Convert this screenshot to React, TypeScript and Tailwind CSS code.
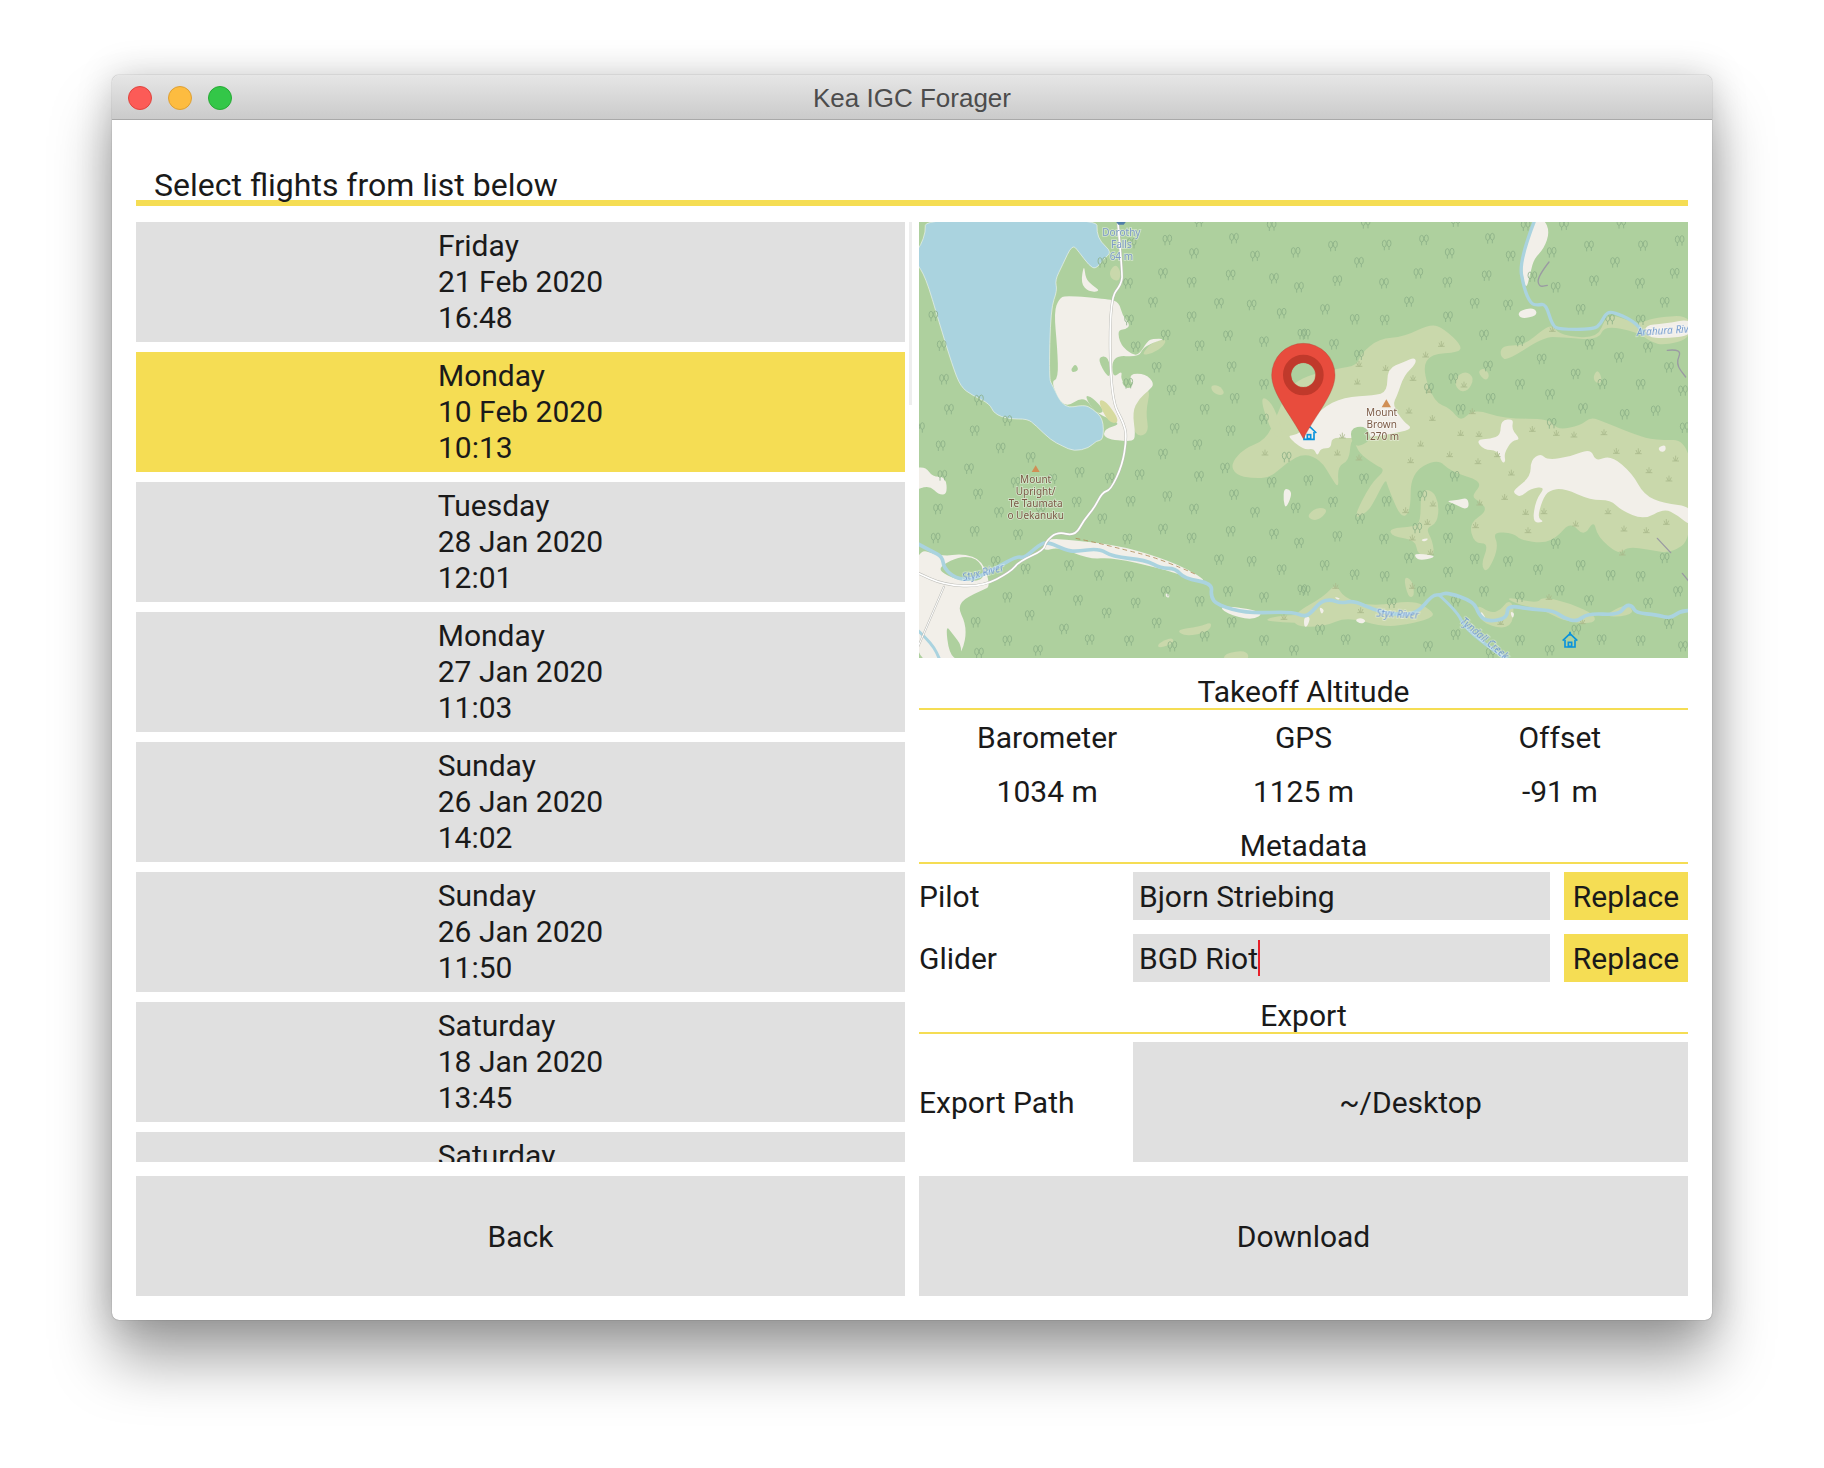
const FOREST = '#aed09e';
const SCRUB = '#c9d8ab';
const BARE = '#f2efe9';
const WATER = '#aad3df';

type Flat = number[];

// map is traced at 3x of its on-screen size; each quadrant is 1155 x 654
function shift(pts: Flat, dx: number, dy: number): Flat {
  return pts.map((v, i) => (i % 2 === 0 ? v + dx : v + dy));
}

function blob(pts: Flat): string {
  const n = pts.length / 2;
  const p = (i: number) => [pts[(i % n) * 2], pts[(i % n) * 2 + 1]];
  const mid = (a: number[], b: number[]) => [(a[0] + b[0]) / 2, (a[1] + b[1]) / 2];
  const s = mid(p(0), p(1));
  let d = `M${s[0]} ${s[1]}`;
  for (let i = 1; i <= n; i++) {
    const m = mid(p(i), p(i + 1));
    d += `Q${p(i)[0]} ${p(i)[1]} ${m[0]} ${m[1]}`;
  }
  return d + 'Z';
}

function line(pts: Flat): string {
  const n = pts.length / 2;
  let d = `M${pts[0]} ${pts[1]}`;
  for (let i = 1; i < n - 1; i++) {
    const mx = (pts[i * 2] + pts[i * 2 + 2]) / 2;
    const my = (pts[i * 2 + 1] + pts[i * 2 + 3]) / 2;
    d += `Q${pts[i * 2]} ${pts[i * 2 + 1]} ${mx} ${my}`;
  }
  return d + `L${pts[n * 2 - 2]} ${pts[n * 2 - 1]}`;
}

const lake: Flat = [18, -10, 20, 30, 5, 70, -10, 90, -10, 120, 20, 165, 60, 300, 100, 430, 125, 495, 160, 520, 212, 545, 225, 575, 270, 592, 325, 590, 350, 610, 395, 654, 430, 672, 465, 688, 510, 678, 532, 656, 553, 654, 553, 590, 520, 560, 495, 548, 435, 560, 400, 490, 390, 470, 395, 260, 415, 205, 408, 175, 430, 130, 460, 66, 480, 90, 510, 130, 530, 142, 555, 110, 578, 90, 545, 60, 533, 30, 535, -10];

const mainScrub: Flat = [935, 725, 975, 680, 1040, 654, 1070, 590, 1090, 540, 1130, 470, 1255, 440, 1315, 430, 1325, 395, 1380, 350, 1455, 345, 1535, 305, 1575, 320, 1628, 370, 1620, 392, 1535, 395, 1510, 440, 1545, 540, 1595, 560, 1625, 600, 1665, 560, 1755, 590, 1895, 590, 1915, 625, 1985, 610, 2015, 585, 2055, 600, 2155, 640, 2205, 654, 2320, 654, 2320, 950, 2255, 994, 2195, 984, 2125, 974, 2100, 999, 2035, 944, 2025, 894, 1995, 944, 1955, 899, 1915, 944, 1875, 964, 1805, 954, 1785, 934, 1720, 929, 1740, 974, 1705, 1054, 1685, 1029, 1710, 964, 1665, 964, 1650, 904, 1705, 867, 1685, 839, 1655, 824, 1695, 779, 1595, 749, 1555, 709, 1475, 754, 1475, 870, 1445, 889, 1405, 790, 1400, 770, 1365, 840, 1345, 870, 1300, 894, 1355, 784, 1400, 744, 1370, 729, 1320, 694, 1305, 654, 1295, 660, 1290, 715, 1255, 734, 1260, 802, 1235, 764, 1205, 714, 1155, 694, 1105, 720, 1055, 767, 1000, 769, 950, 759];

const scrubPatches: Flat[] = [
  [570, 150, 590, 125, 606, 150, 600, 178, 578, 172],
  [875, 490, 900, 490, 918, 512, 905, 522, 880, 510],
  [1020, 520, 1060, 540, 1100, 654, 1060, 640],
  [665, 400, 700, 360, 742, 350, 735, 372, 700, 395],
  [640, 560, 665, 510, 695, 500, 680, 570, 690, 630, 660, 645, 640, 620],
  shift([590, 380, 610, 370, 660, 370, 720, 320, 745, 310, 770, 340, 880, 350, 905, 285, 930, 280, 1000, 305, 1015, 300, 1060, 285, 1160, 280, 1160, 350, 1080, 370, 1040, 360, 1000, 330, 900, 310, 885, 355, 770, 345, 720, 345, 610, 415, 590, 405], 1155, 0),
  shift([865, 470, 880, 440, 895, 470, 885, 488], 1155, 0),
  shift([520, 450, 540, 437, 558, 460, 545, 478], 1155, 0),
  shift([450, 470, 485, 445, 512, 470, 490, 510, 460, 505], 1155, 0),
  shift([255, 265, 330, 260, 350, 245, 350, 150, 385, 150, 405, 190, 400, 250, 365, 265, 385, 300, 392, 352, 340, 345, 335, 300, 265, 290], 1155, 654),
  shift([5, 230, 40, 200, 75, 210, 40, 245], 1155, 654),
  shift([298, 408, 325, 420, 332, 470, 312, 472], 1155, 654),
  shift([-30, 520, 60, 470, 95, 430, 120, 475, 205, 500, 330, 480, 380, 510, 392, 530, 330, 550, 240, 562, 130, 530, 60, 560, -30, 560], 1155, 654),
  shift([515, 490, 530, 550, 620, 570, 632, 500, 612, 480, 590, 510, 560, 520], 1155, 654),
  shift([605, 470, 700, 490, 715, 470, 800, 490, 875, 525, 870, 552, 780, 545, 720, 510, 630, 490], 1155, 654),
  shift([900, 525, 970, 490, 992, 520, 940, 532], 1155, 654),
  shift([770, 570, 840, 560, 880, 545, 870, 575, 800, 590], 0, 654),
  shift([715, 612, 760, 590, 765, 610, 720, 625], 0, 654),
  shift([915, 640, 985, 630, 990, 665, 915, 665], 0, 654),
  shift([1030, 540, 1090, 525, 1170, 525, 1170, 548, 1090, 548], 0, 654),
];

const barePatches: Flat[] = [
  [405, 270, 420, 230, 440, 220, 570, 232, 600, 240, 610, 280, 634, 310, 620, 322, 595, 325, 605, 370, 640, 398, 660, 398, 685, 358, 700, 350, 740, 350, 700, 362, 670, 380, 660, 405, 580, 400, 580, 470, 610, 445, 605, 470, 625, 500, 640, 490, 630, 455, 680, 455, 707, 485, 690, 505, 660, 530, 640, 570, 650, 640, 640, 660, 555, 650, 555, 620, 612, 605, 530, 575, 495, 520, 435, 562, 395, 480, 418, 470, 415, 380],
  [495, 125, 485, 185, 510, 210, 545, 208, 520, 190, 500, 170],
  [1100, 640, 1140, 640, 1205, 560, 1275, 525, 1365, 520, 1405, 510, 1405, 440, 1455, 420, 1488, 405, 1492, 425, 1455, 460, 1435, 520, 1420, 550, 1455, 600, 1482, 620, 1435, 632, 1390, 640, 1300, 650, 1237, 645, 1237, 679, 1205, 679, 1195, 704, 1185, 679, 1155, 684],
  shift([690, -10, 720, -10, 737, 30, 720, 80, 690, 110, 680, 150, 665, 210, 650, 120, 670, 70], 1155, 0),
  shift([640, 268, 690, 255, 702, 280, 650, 292], 1155, 0),
  shift([1020, 310, 1080, 305, 1165, 290, 1165, 340, 1080, 350, 1030, 345], 1155, 0),
  shift([590, 595, 630, 590, 622, 620, 650, 654, 625, 654, 600, 694, 605, 719, 595, 724, 580, 684, 540, 684, 515, 654, 560, 650, 590, 640], 1155, 0),
  shift([630, 150, 680, 110, 680, 60, 710, 40, 730, 60, 800, 50, 860, 25, 875, 65, 920, 45, 985, 100, 1020, 165, 1080, 190, 1165, 200, 1165, 262, 1120, 225, 1080, 205, 1020, 240, 950, 210, 920, 180, 860, 180, 780, 145, 735, 150, 715, 180, 700, 235, 722, 245, 685, 250, 695, 180, 725, 140, 680, 145, 650, 172, 630, 160], 1155, 654),
  shift([425, 183, 465, 180, 490, 173, 496, 200, 480, 208, 450, 190], 1155, 654),
  shift([333, 340, 385, 345, 392, 352, 350, 362, 333, 352], 1155, 654),
  shift([348, 300, 375, 293, 365, 306], 1155, 654),
  shift([1062, 22, 1085, 14, 1085, 34, 1068, 36], 1155, 654),
  shift([152, 540, 170, 532, 188, 544, 170, 552], 1155, 654),
  shift([0, 530, 20, 530, 10, 560, 0, 560], 1155, 654),
  shift([90, 470, 110, 475, 100, 480], 1155, 654),
  shift([45, 500, 62, 510, 52, 525], 1155, 654),
  shift([530, 510, 548, 538, 530, 535], 1155, 654),
  shift([618, 515, 632, 518, 626, 538], 1155, 654),
  shift([380, 295, 460, 300, 590, 315, 700, 345, 790, 380, 860, 420, 840, 425, 790, 405, 720, 385, 580, 352, 510, 358, 420, 320, 370, 335], 0, 654),
  shift([-20, 320, 70, 350, 130, 340, 190, 360, 215, 440, 190, 450, 110, 490, 145, 560, 130, 640, 90, 665, -20, 665], 0, 654),
  shift([900, 495, 1040, 515, 1000, 542, 920, 520], 0, 654),
  shift([-20, 85, 20, 80, 40, 110, 80, 110, 85, 162, 60, 165, 30, 135, -20, 155], 0, 654),
  shift([1095, 145, 1115, 150, 1117, 170, 1100, 207, 1093, 180], 0, 654),
  shift([740, 460, 752, 462, 750, 474, 740, 470], 0, 654),
];

const forestPatches: Flat[] = [
  [535, 405, 570, 402, 575, 470, 555, 450],
  [456, 440, 470, 425, 480, 445, 460, 452],
  [605, 475, 640, 478, 640, 495, 620, 500],
  [495, 520, 520, 525, 560, 570, 530, 575],
  [1290, 620, 1340, 610, 1360, 654, 1305, 680],
  shift([60, 380, 130, 345, 185, 362, 200, 420, 130, 425, 70, 400], 0, 654),
  shift([80, 555, 100, 580, 130, 620, 120, 665, 90, 640], 0, 654),
];

const treesQ1: Flat = [745, 55, 945, 50, 1058, 12, 840, 0, 825, 95, 1008, 103, 1130, 92, 732, 155, 935, 160, 1065, 170, 818, 182, 627, 185, 1140, 197, 702, 242, 900, 245, 998, 250, 1088, 275, 818, 285, 630, 295, 740, 340, 927, 342, 1035, 360, 842, 372, 650, 375, 68, 372, 43, 283, 713, 437, 938, 435, 843, 473, 1035, 488, 628, 485, 758, 505, 947, 530, 857, 563, 1035, 592, 767, 620, 935, 627, 75, 473, 90, 563, 265, 597, 167, 627, 550, 122, 638, 65, 1150, 337, 3, 618, 180, 535];
const treesQ2: Flat = [87, 73, 248, 70, 360, 55, 558, 50, 437, 95, 165, 122, 620, 103, 100, 177, 240, 185, 548, 162, 430, 182, 343, 155, 512, 245, 612, 250, 315, 240, 63, 263, 152, 293, 242, 295, 432, 285, 540, 340, 648, 358, 90, 368, 5, 338, 743, 92, 755, 197, 685, 165, 855, 73, 1017, 72, 1127, 57, 933, 122, 870, 177, 1008, 185, 1112, 155, 1082, 242, 830, 263, 918, 293, 1010, 295, 1032, 377, 857, 368, 713, 412, 945, 407, 1095, 437, 552, 433, 815, 457, 648, 488, 738, 518, 560, 530, 1010, 488, 895, 487, 1137, 507, 837, 560, 962, 578, 1055, 567, 1142, 618, 470, 563, 743, 605, 185, 5, 455, 0, 665, 12, 780, 10, 952, 5, 448, 470, 165, 400, 375, 500];
const treesQ3: Flat = [65, 18, 245, 25, 335, 53, 150, 87, 70, 107, 290, 128, 400, 118, 482, 98, 572, 115, 662, 105, 732, 43, 835, 15, 918, 85, 840, 110, 1058, 128, 1103, 52, 945, 165, 745, 170, 635, 185, 473, 187, 177, 163, 57, 208, 240, 218, 365, 208, 550, 237, 825, 208, 1008, 218, 1130, 205, 732, 268, 935, 275, 167, 275, 297, 285, 50, 295, 625, 298, 818, 295, 1065, 283, 1140, 310, 900, 360, 998, 365, 1088, 390, 230, 365, 320, 388, 450, 377, 540, 407, 630, 410, 740, 455, 927, 455, 1035, 473, 842, 485, 265, 473, 387, 452, 477, 482, 650, 490, 563, 520, 332, 527, 170, 548, 435, 568, 713, 550, 938, 548, 857, 590, 1035, 602, 265, 603, 512, 600, 630, 603, 760, 620, 1125, 632, 357, 632, 180, 640, 1150, 450];
const treesQ4: Flat = [13, 122, 87, 187, 248, 185, 355, 168, 452, 110, 180, 117, 438, 208, 168, 237, 100, 290, 240, 298, 432, 295, 315, 355, 512, 358, 612, 365, 62, 377, 702, 390, 830, 377, 1082, 355, 152, 405, 242, 410, 432, 397, 920, 407, 1010, 410, 353, 455, 540, 455, 767, 452, 1122, 455, 647, 472, 855, 482, 263, 490, 455, 485, 1032, 490, 48, 570, 125, 600, 242, 603, 455, 585, 372, 620, 648, 602, 893, 600, 1010, 603, 817, 570, 1095, 552, 737, 632, 1137, 620, 560, 640, 755, 312, 5, 453, 340, 265];
const trees: Flat = [...treesQ1, ...shift(treesQ2, 1155, 0), ...shift(treesQ3, 0, 654), ...shift(treesQ4, 1155, 654)];

const grassQ2: Flat = [412, 365, 365, 397, 160, 478, 245, 437, 327, 467, 375, 503, 315, 565, 385, 587, 505, 567, 480, 487, 745, 320, 685, 620, 810, 637, 900, 630, 757, 632, 470, 632, 525, 635, 115, 640, 165, 425];
const grassQ4: Flat = [100, 37, 165, 52, 350, 10, 437, 42, 522, 63, 622, 97, 580, 42, 602, 170, 527, 187, 665, 215, 720, 213, 515, 255, 672, 270, 815, 250, 912, 213, 960, 265, 1027, 270, 1087, 245, 1115, 55, 1003, 33, 937, 32, 1035, 90, 1095, 115, 325, 292, 370, 245, 387, 190, 305, 210, 320, 60, 380, 335, 170, 510, 325, 437, 955, 337, 735, 470, 835, 543, 590, 545, 95, 437];
const grass: Flat = [...shift(grassQ2, 1155, 0), ...shift(grassQ4, 1155, 654), 1038, 691, 1095, 1184];

const styx: Flat = [...shift([-10, 308, 40, 335, 70, 350, 75, 385, 110, 415, 160, 420, 230, 385, 295, 348, 315, 355, 360, 315, 385, 305, 440, 330, 470, 335, 540, 325, 580, 350, 680, 360, 725, 385, 770, 385, 795, 415, 880, 430, 875, 470, 895, 495, 985, 520, 1120, 515, 1155, 530], 0, 654), ...shift([20, 520, 50, 485, 80, 478, 110, 490, 150, 482, 210, 510, 280, 525, 340, 520, 385, 465, 410, 465, 430, 457, 510, 485, 525, 525, 550, 545, 610, 535, 610, 495, 680, 508, 750, 512, 780, 535, 820, 545, 850, 520, 945, 525, 965, 495, 985, 497, 995, 518, 1060, 525, 1100, 535, 1125, 515, 1165, 510], 1155, 654)];
const tyndall: Flat = shift([405, 465, 460, 515, 480, 560, 540, 610, 610, 660, 645, 660], 1155, 654);
const arahura: Flat = shift([694, -10, 645, 115, 660, 200, 680, 245, 700, 250, 725, 245, 745, 310, 765, 322, 870, 322, 890, 305, 905, 275, 925, 268, 990, 297, 1020, 335], 1155, 0);
const creekLeft: Flat = shift([-10, 565, 40, 610, 65, 665], 0, 654);

const road: Flat = [597, 5, 610, 150, 608, 185, 572, 232, 575, 530, 618, 610, 622, 654, 610, 729, 575, 804, 550, 811, 525, 859, 495, 894, 468, 942, 415, 929, 380, 959, 375, 984, 300, 1019, 275, 1049, 190, 1094, 75, 1089, -10, 1050];
const roadBranch: Flat = [75, 1094, -5, 1280];
const dashes: Flat = [470, 949, 520, 959, 620, 984, 700, 1004, 790, 1039, 835, 1059];

function HutIcon({ x, y }: { x: number; y: number }) {
  return (
    <g transform={`translate(${x} ${y})`} fill="none" stroke="#0a93dc" strokeWidth="5">
      <path d="M-22 1 L0 -20 L22 1" />
      <path d="M-15 -2 V20 H15 V-2" />
      <path d="M0 -26 V-14" />
      <rect x="-5" y="6" width="10" height="12" />
    </g>
  );
}

function MapLabel({ x, y, lines, fill, size = 30, rotate = 0, italic = false }: {
  x: number; y: number; lines: string[]; fill: string; size?: number; rotate?: number; italic?: boolean;
}) {
  return (
    <g transform={`translate(${x} ${y}) rotate(${rotate})`} className="blur-[0.3px]">
      {lines.map((l, i) => (
        <text
          key={l}
          y={i * 36}
          textAnchor="middle"
          fontSize={size}
          fontStyle={italic ? 'italic' : 'normal'}
          fill={fill}
          stroke="#ffffff"
          strokeOpacity="0.45"
          strokeWidth="5"
          paintOrder="stroke"
        >
          {l}
        </text>
      ))}
    </g>
  );
}

function pairs(f: Flat): number[][] {
  const out: number[][] = [];
  for (let i = 0; i < f.length; i += 2) out.push([f[i], f[i + 1]]);
  return out;
}

function TopoMap() {
  return (
    <svg viewBox="0 0 2307 1308" className="block h-[436px] w-full font-['Noto_Sans',sans-serif]">
      <g className="blur-[0.4px]">
        <rect width="2307" height="1308" fill={FOREST} />
        <path d={blob(mainScrub)} fill={SCRUB} />
        {scrubPatches.map((p, i) => <path key={i} d={blob(p)} fill={SCRUB} />)}
        {barePatches.map((p, i) => <path key={i} d={blob(p)} fill={BARE} />)}
        {forestPatches.map((p, i) => <path key={i} d={blob(p)} fill={FOREST} />)}
        <path d={blob([535, 535, 560, 535, 605, 600, 570, 605])} fill="#d6da9f" />
        <path d={blob(lake)} fill={WATER} stroke="#eef3ea" strokeWidth="2" />

        {pairs(grass).map(([x, y], i) => (
          <path key={i} d={`M${x - 10} ${y + 8}H${x + 10}M${x} ${y + 8}V${y - 8}M${x - 7} ${y - 3}L${x - 2} ${y + 8}M${x + 7} ${y - 3}L${x + 2} ${y + 8}`} stroke="#a9b98c" strokeWidth="2.5" fill="none" />
        ))}
        {pairs(trees).map(([x, y], i) => (
          <g key={i} fill="none" stroke="#8aaf86" strokeWidth="2.4">
            <ellipse cx={x - 7} cy={y - 5} rx="6" ry="10" />
            <ellipse cx={x + 7} cy={y - 6} rx="6" ry="10" />
            <path d={`M${x - 7} ${y + 5}V${y + 15}M${x + 7} ${y + 4}V${y + 14}`} />
          </g>
        ))}

        <g fill="none" strokeLinecap="round" strokeLinejoin="round" stroke="#9a9aa2" strokeWidth="4">
          <path d={line(shift([735, 120, 700, 165, 705, 195, 730, 190], 1155, 0))} />
          <path d={line(shift([1090, 385, 1135, 380, 1115, 425, 1145, 465], 1155, 0))} />
          <path d={line(shift([1060, 295, 1100, 338], 1155, 654))} />
          <path d={line(shift([1135, 400, 1155, 425], 1155, 654))} />
        </g>

        <g fill="none" stroke={WATER} strokeLinecap="round" strokeLinejoin="round">
          <path d={line(styx)} strokeWidth="11" />
          <path d={line(arahura)} strokeWidth="10" />
          <path d={line(tyndall)} strokeWidth="9" />
          <path d={line(creekLeft)} strokeWidth="9" />
        </g>

        <path d={line(dashes)} fill="none" stroke="#b08a58" strokeWidth="2.5" strokeDasharray="14 10" />
        <g fill="none" strokeLinecap="round" strokeLinejoin="round">
          <path d={line(road)} stroke="#bdbdb8" strokeWidth="8" />
          <path d={line(roadBranch)} stroke="#bdbdb8" strokeWidth="6" />
          <path d={line(road)} stroke="#ffffff" strokeWidth="5" />
          <path d={line(roadBranch)} stroke="#ffffff" strokeWidth="3" />
        </g>

        <path d="M350 730 L362 750 H338Z" fill="#d08f55" />
        <path d="M1388 556 L1402 532 L1416 556Z" fill="#d08f55" />
        <HutIcon x={1953} y={1255} />
        <HutIcon x={1170} y={632} />
        <path d="M590 -2H622L614 8H598Z" fill="#4f7ea8" />
      </g>

      <MapLabel x={607} y={42} lines={['Dorothy', 'Falls', '64 m']} fill="#7e9cc6" />
      <MapLabel x={350} y={782} lines={['Mount', 'Upright/', 'Te Taumata', 'o Uekanuku']} fill="#7b5a46" />
      <MapLabel x={1388} y={582} lines={['Mount', 'Brown', '1270 m']} fill="#7b5a46" />
      <MapLabel x={195} y={1062} lines={['Styx River']} fill="#6c96cc" size={30} rotate={-14} italic />
      <MapLabel x={1435} y={1187} lines={['Styx River']} fill="#6c96cc" size={30} rotate={3} italic />
      <MapLabel x={1690} y={1258} lines={['Tyndall Creek']} fill="#6c96cc" size={30} rotate={40} italic />
      <MapLabel x={2245} y={336} lines={['Arahura River']} fill="#6c96cc" size={30} rotate={-4} italic />

      <path
        d="M1058 459A95 95 0 0 1 1248 459C1248 515 1192 575 1153 650C1114 575 1058 515 1058 459Z M1116 459A37 37 0 0 0 1190 459A37 37 0 0 0 1116 459Z"
        fill="#e84c3d"
        fillRule="evenodd"
        stroke="#a8483a"
        strokeOpacity="0.5"
        strokeWidth="2"
      />
      <circle cx="1153" cy="459" r="49" fill="none" stroke="#c0392b" strokeWidth="24" />
    </svg>
  );
}

const flights = [
  ['Friday', '21 Feb 2020', '16:48'],
  ['Monday', '10 Feb 2020', '10:13'],
  ['Tuesday', '28 Jan 2020', '12:01'],
  ['Monday', '27 Jan 2020', '11:03'],
  ['Sunday', '26 Jan 2020', '14:02'],
  ['Sunday', '26 Jan 2020', '11:50'],
  ['Saturday', '18 Jan 2020', '13:45'],
  ['Saturday', '18 Jan 2020', '10:20'],
];

function FlightRow({ lines, selected }: { lines: string[]; selected: boolean }) {
  return (
    <div className={`flex h-[120px] shrink-0 items-center justify-center ${selected ? 'bg-[#f5dd54]' : 'bg-[#e0e0e0]'}`}>
      <div className="text-left leading-[36px]">
        {lines.map((l) => <div key={l}>{l}</div>)}
      </div>
    </div>
  );
}

function SectionHead({ title }: { title: string }) {
  return (
    <div className="flex h-10 items-center justify-center border-b-2 border-[#f5dd54] pt-[4px]">
      {title}
    </div>
  );
}

function MetaRow({ label, value, caret }: { label: string; value: string; caret?: boolean }) {
  return (
    <div className="flex h-12 items-center">
      <div className="w-[214px]">{label}</div>
      <div className="flex h-full w-[417px] items-center bg-[#e0e0e0] pl-[6px]">
        {value}
        {caret && <span className="h-9 w-[2px] bg-[#e8202a]" />}
      </div>
      <div className="ml-[14px] flex h-full flex-1 items-center justify-center bg-[#f5dd54]">Replace</div>
    </div>
  );
}

export default function App() {
  return (
    <div className="h-[1468px] w-[1824px] overflow-hidden bg-white pl-[112px] pt-[75px] font-['Roboto',sans-serif] text-[30px] text-[#1a1a1a]">
      <div className="h-[1245px] w-[1600px] overflow-hidden rounded-[7px] bg-white shadow-[0_40px_60px_rgba(0,0,0,0.36),0_0_36px_rgba(0,0,0,0.18),0_0_1px_rgba(0,0,0,0.6)]">
        <div className="relative flex h-[45px] items-center justify-center border-b border-[#a9a9a9] bg-gradient-to-b from-[#e6e6e6] to-[#cbcbcb] pt-[3px] font-['Liberation_Sans',sans-serif] text-[26px] text-[#4c4c4c]">
          Kea IGC Forager
          <div className="absolute left-[16px] top-[11px] flex gap-4">
            <span className="size-6 rounded-full border border-[#e0443e] bg-[#fc5b57]" />
            <span className="size-6 rounded-full border border-[#dea034] bg-[#fdbc40]" />
            <span className="size-6 rounded-full border border-[#27aa35] bg-[#33c748]" />
          </div>
        </div>

        <div className="px-6">
          <div className="mt-[40px] h-[46px] border-b-[6px] border-[#f5dd54] pl-[18px] text-[32px] leading-[50px]">
            Select flights from list below
          </div>

          <div className="mt-4 flex gap-[14px]">
            <div className="relative w-[769px]">
              <div className="flex h-[940px] flex-col gap-[10px] overflow-hidden">
                {flights.map((f, i) => (
                  <FlightRow key={i} lines={f} selected={i === 1} />
                ))}
              </div>
              <div className="absolute left-[773px] top-0 h-[183px] w-[3px] bg-[#eeeeee]" />
              <div className="mt-[14px] flex h-[120px] items-center justify-center bg-[#e0e0e0]">Back</div>
            </div>

            <div className="w-[769px]">
              <TopoMap />
              <div className="mt-[12px]">
                <SectionHead title="Takeoff Altitude" />
              </div>
              <div className="grid grid-cols-3 text-center">
                <div className="flex h-[54px] items-center justify-center">Barometer</div>
                <div className="flex h-[54px] items-center justify-center">GPS</div>
                <div className="flex h-[54px] items-center justify-center">Offset</div>
                <div className="flex h-[54px] items-center justify-center">1034 m</div>
                <div className="flex h-[54px] items-center justify-center">1125 m</div>
                <div className="flex h-[54px] items-center justify-center">-91 m</div>
              </div>
              <div className="mt-[6px]">
                <SectionHead title="Metadata" />
              </div>
              <div className="mt-[8px] flex flex-col gap-[14px]">
                <MetaRow label="Pilot" value="Bjorn Striebing" />
                <MetaRow label="Glider" value="BGD Riot" caret />
              </div>
              <div className="mt-[12px]">
                <SectionHead title="Export" />
              </div>
              <div className="mt-[8px] flex h-[120px] items-center">
                <div className="w-[214px]">Export Path</div>
                <div className="flex h-full flex-1 items-center justify-center bg-[#e0e0e0]">~/Desktop</div>
              </div>
              <div className="mt-[14px] flex h-[120px] items-center justify-center bg-[#e0e0e0]">Download</div>
            </div>
          </div>
        </div>
      </div>
    </div>
  );
}
